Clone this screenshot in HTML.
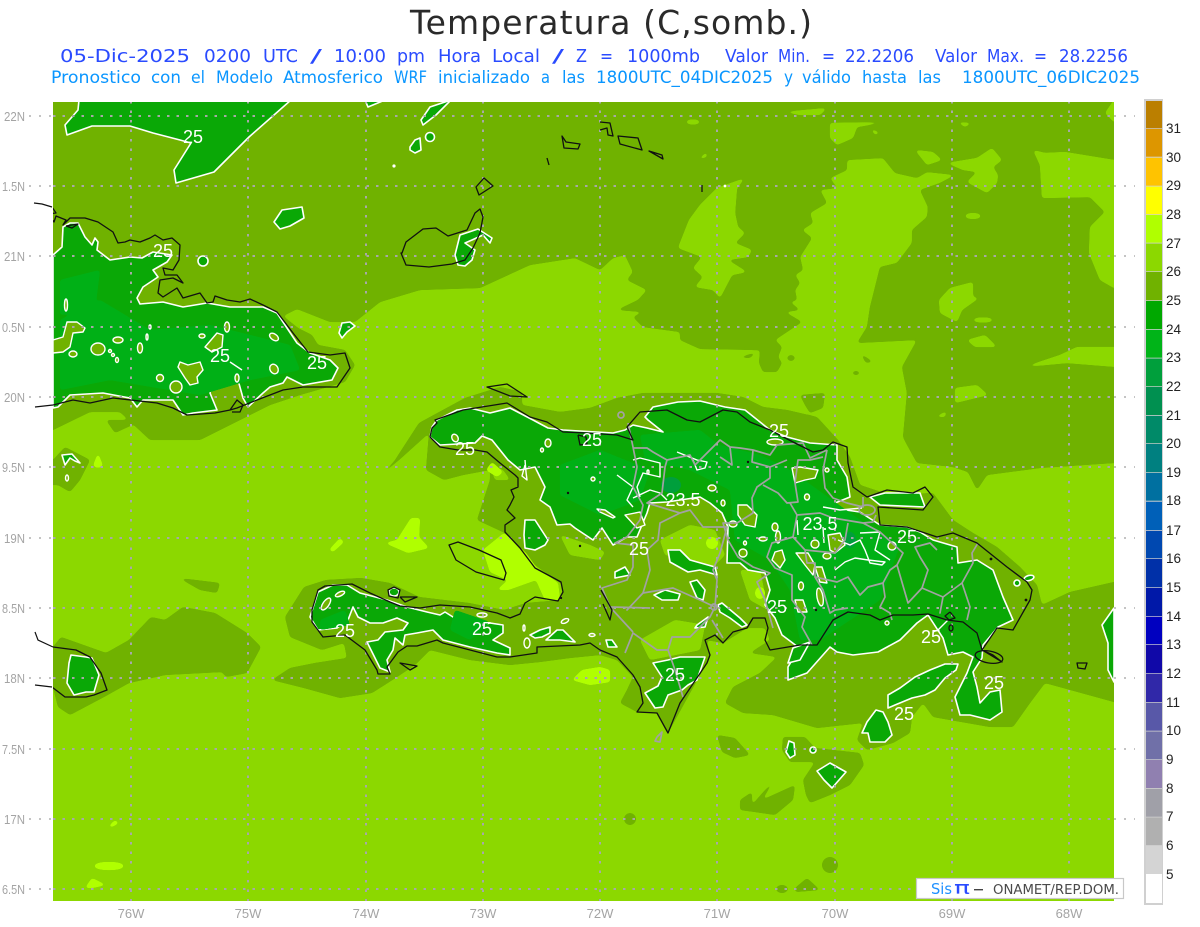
<!DOCTYPE html>
<html lang="es"><head><meta charset="utf-8"><title>Temperatura</title>
<style>html,body{margin:0;padding:0;background:#fff}svg{display:block}text{font-family:"Liberation Sans",sans-serif}.d text,text.d{font-family:"DejaVu Sans",sans-serif}</style></head>
<body>
<svg width="1200" height="927" viewBox="0 0 1200 927" xmlns="http://www.w3.org/2000/svg">
<rect width="1200" height="927" fill="#fff"/>
<!-- titles -->
<text class="d" x="410" y="34" font-size="33" fill="#2a2a2a" textLength="402" lengthAdjust="spacing">Temperatura (C,somb.)</text>
<g class="d" font-size="17.500" fill="#2a4bff">
<text x="60" y="62" textLength="130" lengthAdjust="spacingAndGlyphs">05-Dic-2025</text>
<text x="204" y="62" textLength="47" lengthAdjust="spacingAndGlyphs">0200</text>
<text x="263" y="62" textLength="35" lengthAdjust="spacingAndGlyphs">UTC</text>
<text x="310" y="62" textLength="12" lengthAdjust="spacingAndGlyphs">/</text>
<text x="334" y="62" textLength="52" lengthAdjust="spacingAndGlyphs">10:00</text>
<text x="397" y="62" textLength="28" lengthAdjust="spacingAndGlyphs">pm</text>
<text x="438" y="62" textLength="43" lengthAdjust="spacingAndGlyphs">Hora</text>
<text x="492" y="62" textLength="48" lengthAdjust="spacingAndGlyphs">Local</text>
<text x="552" y="62" textLength="12" lengthAdjust="spacingAndGlyphs">/</text>
<text x="576" y="62" textLength="11" lengthAdjust="spacingAndGlyphs">Z</text>
<text x="600" y="62" textLength="13" lengthAdjust="spacingAndGlyphs">=</text>
<text x="627" y="62" textLength="73" lengthAdjust="spacingAndGlyphs">1000mb</text>
<text x="725" y="62" textLength="43" lengthAdjust="spacingAndGlyphs">Valor</text>
<text x="778" y="62" textLength="32" lengthAdjust="spacingAndGlyphs">Min.</text>
<text x="822" y="62" textLength="13" lengthAdjust="spacingAndGlyphs">=</text>
<text x="845" y="62" textLength="69" lengthAdjust="spacingAndGlyphs">22.2206</text>
<text x="935" y="62" textLength="42" lengthAdjust="spacingAndGlyphs">Valor</text>
<text x="987" y="62" textLength="37" lengthAdjust="spacingAndGlyphs">Max.</text>
<text x="1034" y="62" textLength="13" lengthAdjust="spacingAndGlyphs">=</text>
<text x="1059" y="62" textLength="69" lengthAdjust="spacingAndGlyphs">28.2256</text>
</g>
<g class="d" font-size="17" fill="#0a96ff">
<text x="51" y="83" textLength="90" lengthAdjust="spacingAndGlyphs">Pronostico</text>
<text x="151" y="83" textLength="30" lengthAdjust="spacingAndGlyphs">con</text>
<text x="191" y="83" textLength="14" lengthAdjust="spacingAndGlyphs">el</text>
<text x="216" y="83" textLength="57" lengthAdjust="spacingAndGlyphs">Modelo</text>
<text x="283" y="83" textLength="100" lengthAdjust="spacingAndGlyphs">Atmosferico</text>
<text x="394" y="83" textLength="33" lengthAdjust="spacingAndGlyphs">WRF</text>
<text x="438" y="83" textLength="92" lengthAdjust="spacingAndGlyphs">inicializado</text>
<text x="541" y="83" textLength="9" lengthAdjust="spacingAndGlyphs">a</text>
<text x="562" y="83" textLength="23" lengthAdjust="spacingAndGlyphs">las</text>
<text x="596" y="83" textLength="177" lengthAdjust="spacingAndGlyphs">1800UTC_04DIC2025</text>
<text x="784" y="83" textLength="9" lengthAdjust="spacingAndGlyphs">y</text>
<text x="802" y="83" textLength="49" lengthAdjust="spacingAndGlyphs">válido</text>
<text x="862" y="83" textLength="45" lengthAdjust="spacingAndGlyphs">hasta</text>
<text x="918" y="83" textLength="23" lengthAdjust="spacingAndGlyphs">las</text>
<text x="962" y="83" textLength="178" lengthAdjust="spacingAndGlyphs">1800UTC_06DIC2025</text>
</g>

<defs>
<clipPath id="m"><rect x="53" y="102" width="1061" height="799"/></clipPath>
<filter id="g" filterUnits="userSpaceOnUse" x="0" y="80" width="1200" height="847" color-interpolation-filters="sRGB">
<feGaussianBlur stdDeviation="1.6"/>
<feColorMatrix type="matrix" values="1 0 0 0 0 0 1 0 0 0 0 0 1 0 0 0 0 0 14 -6"/>
</filter>
</defs>
<rect x="53" y="102" width="1061" height="799" fill="#8cd800"/>
<g clip-path="url(#m)">
<!-- olive -->
<g fill="#70b200" filter="url(#g)">
<polygon points="40,90 1130,90 1130,463 1114,463 1040,468 987,475 977,490 968,472 953,467 917,463 906,443 903,437 907,393 902,367 917,340 857,343 867,327 870,307 880,267 897,263 912,243 912,230 927,217 928,207 920,190 940,183 955,175 927,172 917,178 895,173 883,158 847,160 847,170 830,178 837,188 820,190 827,203 810,213 813,223 802,230 812,238 800,257 803,270 795,275 800,283 795,290 797,300 790,302 800,310 785,312 802,322 790,330 775,340 782,347 778,357 782,363 777,372 763,372 759,363 760,350 700,349 680,340 680,332 643,327 633,317 643,312 617,310 638,300 647,290 627,280 633,272 625,255 613,258 600,270 575,258 530,265 480,288 420,290 380,302 355,322 330,322 297,309 283,316 298,328 312,335 318,345 345,350 355,365 345,382 300,395 270,405 240,420 200,440 150,440 120,412 90,412 53,430 40,436"/>
<polygon points="369,487 395,460 419,423 465,398 500,387 522,392 522,405 560,412 590,408 617,398 643,393 717,393 743,397 763,407 787,410 817,417 838,440 850,457 860,485 890,495 933,493 953,520 973,533 997,547 1020,567 1037,585 1042,605 1070,592 1114,582 1130,582 1130,708 1114,702 1045,683 1030,703 1013,727 990,727 933,717 923,703 912,717 910,733 893,743 867,750 857,740 863,723 817,728 773,715 743,713 725,703 733,687 760,673 777,657 750,653 770,640 765,628 747,628 723,643 707,640 710,657 690,693 668,733 657,713 637,712 620,703 627,690 633,677 617,660 600,655 570,658 540,662 510,665 470,660 430,650 415,665 397,677 372,693 340,698 304,688 272,680 290,668 315,663 347,658 344,643 322,650 290,637 285,617 304,587 326,580 361,578 390,583 419,597 469,603 504,610 526,603 562,600 563,585 535,565 505,533 477,520 490,480 490,470 463,475 444,480 426,470 429,433"/>
<polygon points="61,637 106,653 129,640 151,617 165,620 183,607 215,613 247,633 261,647 254,660 247,673 226,677 222,672 165,675 129,683 104,697 70,715 58,707 53,687 40,687 40,647 53,647"/>
<polygon points="179,578 220,583 217,593 200,590"/>
<polygon points="40,460 53,460 65,447 90,460 80,480 70,492 58,485 40,485"/>
<polygon points="106,420 115,433 143,420"/>
<polygon points="717,735 735,738 750,755 735,758 722,752"/>
<polygon points="783,737 805,737 815,748 860,753 864,765 850,785 830,795 810,803 806,795 803,780 815,762 790,762 782,750"/>
<polygon points="740,800 752,792 752,805 765,790 776,778 762,800 795,785 793,800 775,815 755,812 740,810"/>
<circle cx="630" cy="819" r="6"/><circle cx="830" cy="865" r="8"/>
<polygon points="795,888 807,878 820,890 795,892"/><ellipse cx="782" cy="889" rx="6" ry="4"/>
<polygon points="860,353 873,362 866,363"/><ellipse cx="856" cy="373" rx="4" ry="2"/><ellipse cx="791" cy="358" rx="4" ry="3"/>
<polygon points="800,395 825,393 823,408 810,413 805,405"/><polygon points="737,358 757,352 750,358"/>
</g>
<!-- light patches -->
<g fill="#8cd800" filter="url(#g)">
<polygon points="783,112 827,108 820,115 800,115"/>
<polygon points="830,123 888,122 857,127 853,138 837,145 830,138"/>
<polygon points="870,128 880,133 875,135"/>
<polygon points="915,150 933,152 942,160 927,165"/>
<polygon points="957,122 972,123 965,127"/>
<polygon points="947,163 977,158 992,148 1002,160 993,167 998,175 997,183 987,193 967,182 977,172 963,170"/>
<polygon points="1033,150 1040,165 1042,198 1090,197 1105,212 1090,227 1089,253 1100,280 1114,288 1130,290 1130,160 1114,160 1065,152 1045,153"/>
<polygon points="1105,113 1114,100 1130,100 1130,122 1114,122"/>
<polygon points="689,220 700,205 717,188 745,178 737,188 735,213 738,227 745,233 735,243 752,250 748,257 728,260 747,272 732,275 720,298 713,290 695,287 703,277 693,268 702,257 678,248"/>
<polygon points="939,300 950,288 973,282 973,297 979,298 962,310 957,322 940,313"/>
<polygon points="967,340 985,335 997,347 975,347"/>
<polygon points="1024,367 1060,355 1077,347 1130,347 1130,368 1067,363"/>
<polygon points="955,388 977,385 988,395 955,403"/>
<ellipse cx="973" cy="216" rx="8" ry="3"/><ellipse cx="983" cy="320" rx="10" ry="2.500"/>
<polygon points="697,160 707,152 707,157"/><ellipse cx="693" cy="122" rx="7" ry="2.500"/>
<polygon points="935,417 947,411 945,417"/>
<polygon points="660,540 690,525 715,530 725,555 710,570 690,560 665,555"/>
<polygon points="640,640 675,620 705,625 700,650 650,660"/>
<polygon points="740,570 760,570 768,610 750,600"/>
<polygon points="560,535 590,545 605,552 600,560 570,555"/>
<polygon points="490,465 503,470 510,480 495,480"/>
</g>
<!-- lime -->
<g fill="#b0ff00" filter="url(#g)">
<polygon points="483,550 504,533 526,553 536,567 558,583 560,600 545,600 536,580 508,590 497,590 508,580 490,572"/>
<polygon points="411,518 420,518 419,537 429,548 408,553 385,543 397,540"/>
<polygon points="329,550 340,538 344,542 333,552"/>
<polygon points="93,466 98,453 103,466 98,468"/>
<ellipse cx="109" cy="866" rx="15" ry="4"/><polygon points="85,888 92,878 106,885 92,888"/>
<polygon points="108,827 115,820 119,823 112,827"/>
<polygon points="572,680 582,670 600,667 610,670 610,682 590,685"/>
<polygon points="486,470 492,462 503,472 497,477"/>
<ellipse cx="712" cy="543" rx="6" ry="6"/><ellipse cx="760" cy="593" rx="5" ry="6"/>
</g>
<!-- green with white contour -->
<g fill="#0aa806" stroke="#fff" stroke-width="1.6" stroke-linejoin="round">
<polygon points="79,100 78,110 65,125 67,135 92,126 130,126 153,133 180,140 191,143 174,170 176,183 214,172 249,137 291,100"/>
<polygon points="365,100 368,107 385,100"/>
<polygon points="451,100 430,107 421,120 423,125 436,115"/>
<polygon points="410,147 415,140 420,138 421,150 415,153 410,150"/><circle cx="430" cy="137" r="4.5"/>
<polygon points="274,222 282,210 302,207 304,218 290,226 280,229"/>
<polygon points="455,255 460,235 478,229 492,238 490,243 483,235 472,240 465,243 475,250 472,260 465,266 458,265"/>
<circle cx="203" cy="261" r="5"/>
<polygon points="53,255 62,247 63,227 70,223 78,223 85,237 92,245 95,238 98,242 97,250 110,260 130,257 142,258 153,252 172,255 167,262 153,270 158,277 143,287 137,298 140,304 163,302 183,307 207,303 230,307 263,307 277,313 297,343 310,353 330,360 338,368 332,380 303,385 287,377 283,383 270,387 263,393 248,407 243,398 238,380 228,366 222,366 213,380 210,393 217,410 193,413 183,415 173,400 143,400 137,407 130,398 103,393 70,395 58,407 53,408"/>
<polygon points="339,333 342,338 347,332 355,326 350,322 342,323"/>
<polygon points="71,655 86,657 92,658 99,675 94,692 86,692 74,695 67,683 69,663"/>
<polygon points="318,592 333,585 347,585 360,593 387,600 407,607 427,612 440,615 445,612 453,617 465,618 470,622 453,622 470,628 490,623 503,625 503,633 493,640 510,648 510,655 497,653 470,647 443,640 433,630 417,633 405,635 403,645 395,638 393,650 387,660 390,672 380,668 367,642 378,640 385,632 403,630 408,623 397,618 383,623 370,623 358,617 353,607 348,620 337,628 318,630 310,617"/>
<ellipse cx="394" cy="592" rx="5" ry="4"/>
<polygon points="530,635 540,630 550,627 550,633 542,637 535,638"/>
<polygon points="546,640 557,630 563,630 575,642 560,640"/>
<polygon points="437,420 457,410 470,408 490,413 510,408 533,420 548,428 563,430 613,433 625,430 633,425 647,428 663,432 648,420 645,417 653,407 678,402 700,401 725,407 745,410 770,430 787,437 810,443 837,445 837,460 847,477 850,497 825,507 860,512 880,525 907,527 920,532 933,540 957,547 958,563 977,560 993,570 1003,597 1013,620 998,627 983,645 982,658 973,672 977,687 980,703 990,692 1000,690 1002,712 990,720 970,715 960,715 955,697 967,673 973,657 963,652 948,655 943,638 928,615 917,623 900,640 878,652 853,655 837,652 830,647 807,673 788,680 788,667 800,647 798,647 782,635 775,618 765,605 770,590 765,573 748,570 740,563 727,563 728,527 722,513 710,503 700,497 667,502 650,503 647,513 637,537 627,537 613,545 602,528 593,540 575,528 570,524 557,525 550,507 540,500 545,487 535,467 520,470 508,460 492,440 482,436 475,443 440,445 430,437 432,427"/>
<polygon points="870,497 885,493 920,493 925,507 880,505"/>
<polygon points="525,520 535,520 548,540 545,545 535,550 525,548 524,535"/>
<polygon points="668,550 680,550 690,560 715,567 717,575 700,570 688,572 670,562"/>
<polygon points="615,572 625,567 630,575 615,578"/>
<polygon points="690,582 697,580 705,590 703,600 697,598"/>
<polygon points="654,595 665,590 680,594 678,600 662,600"/>
<polygon points="653,663 668,660 680,657 705,657 697,680 688,685 682,690 668,695 663,707 655,708 645,693 658,686 662,677"/>
<polygon points="606,640 612,640 617,647 608,647"/>
<polygon points="718,605 722,603 740,618 747,625 742,627 730,618 720,612"/>
<polygon points="697,625 708,617 705,627 695,628"/>
<polygon points="788,663 793,648 810,642 800,660"/>
<polygon points="888,695 900,688 915,677 930,670 945,664 958,664 956,670 945,678 935,690 925,695 912,698 895,705 888,708"/>
<polygon points="862,733 867,722 876,710 883,712 888,722 892,735 885,742 870,742 868,733"/>
<polygon points="786,752 789,741 794,743 795,755 790,758"/>
<circle cx="813" cy="750" r="3"/>
<polygon points="817,771 830,763 846,772 832,788 824,780"/>
<polygon points="1114,608 1102,625 1108,643 1108,670 1114,682"/>
<polygon points="62,455 72,454 80,463 75,461 70,458 65,465"/>
<circle cx="1017" cy="583" r="3"/>
<ellipse cx="1029" cy="578" rx="5" ry="2.5" transform="rotate(-15 1029 578)"/>
</g>
<!-- lighter green interior -->
<g fill="#00b016" filter="url(#g)">
<polygon points="700,440 760,455 790,470 860,520 900,545 880,600 820,640 800,640 790,590 770,560 735,540 730,490 690,470"/>
<polygon points="60,320 100,300 150,330 210,325 290,345 300,370 250,380 200,395 110,380 60,390"/>
<polygon points="560,465 600,450 650,470 640,500 600,515 560,495"/>
<polygon points="60,280 100,270 95,310 60,315"/>
<polygon points="320,620 345,610 350,625 320,630"/>
<polygon points="455,610 490,622 470,640 450,630"/>
<polygon points="640,435 700,430 725,450 690,470 645,460"/>
</g>
<g fill="#009f3c"><ellipse cx="671" cy="485" rx="10" ry="8"/><ellipse cx="850" cy="540" rx="6" ry="8"/><ellipse cx="215" cy="343" rx="4" ry="5"/></g>
<!-- holes -->
<g fill="#70b200" stroke="#fff" stroke-width="1.4" stroke-linejoin="round">
<polygon points="53,340 63,337 67,322 77,322 85,328 83,332 73,333 70,347 63,352 53,353"/>
<ellipse cx="66" cy="305" rx="1.5" ry="6"/><ellipse cx="73" cy="354" rx="4" ry="3"/><ellipse cx="98" cy="349" rx="7" ry="6"/><ellipse cx="118" cy="340" rx="5" ry="3"/>
<circle cx="110" cy="351" r="1.5"/><circle cx="113" cy="355" r="1.5"/><ellipse cx="117" cy="360" rx="1.5" ry="2.5"/>
<ellipse cx="140" cy="348" rx="2.5" ry="5"/><ellipse cx="150" cy="327" rx="1" ry="2"/><ellipse cx="147" cy="337" rx="1" ry="3"/>
<circle cx="160" cy="378" r="3.5"/><circle cx="176" cy="387" r="6"/>
<polygon points="180,362 188,365 200,362 203,370 197,377 198,383 190,385 185,378 178,367"/>
<polygon points="205,347 217,333 223,335 222,347 212,352"/>
<ellipse cx="227" cy="327" rx="2.5" ry="5"/><ellipse cx="202" cy="336" rx="3" ry="2"/><ellipse cx="274" cy="337" rx="5" ry="3" transform="rotate(35 274 337)"/><ellipse cx="274" cy="369" rx="4" ry="5" transform="rotate(-30 274 369)"/><ellipse cx="237" cy="378" rx="2" ry="4"/>
<ellipse cx="326" cy="604" rx="3" ry="7" transform="rotate(35 326 604)"/><ellipse cx="340" cy="594" rx="5" ry="2" transform="rotate(-25 340 594)"/>
<ellipse cx="482" cy="615" rx="5" ry="2"/><ellipse cx="565" cy="621" rx="4" ry="2" transform="rotate(-25 565 621)"/><ellipse cx="524" cy="628" rx="1" ry="3"/><ellipse cx="527" cy="643" rx="3" ry="5"/>
<polygon points="597,509 605,510 615,517 613,518 600,512"/>
<ellipse cx="648" cy="472" rx="1" ry="2"/><circle cx="593" cy="479" r="2"/><ellipse cx="723" cy="503" rx="2" ry="3"/><ellipse cx="712" cy="488" rx="4" ry="3"/><ellipse cx="548" cy="443" rx="3" ry="4"/><ellipse cx="542" cy="450" rx="1.5" ry="2"/><ellipse cx="455" cy="438" rx="3" ry="4" transform="rotate(-30 455 438)"/>
<ellipse cx="775" cy="442" rx="8" ry="3"/>
<polygon points="792,468 800,467 818,470 815,478 805,480 795,483"/>
<ellipse cx="807" cy="497" rx="2.5" ry="3"/><circle cx="827" cy="470" r="2"/>
<polygon points="738,505 747,505 757,515 755,527 745,525 738,515"/>
<ellipse cx="733" cy="524" rx="4" ry="3"/><ellipse cx="775" cy="527" rx="3" ry="4"/><ellipse cx="815" cy="544" rx="4" ry="4"/>
<polygon points="828,535 840,533 845,545 835,553 830,550"/>
<ellipse cx="778" cy="537" rx="2.5" ry="6"/>
<polygon points="775,552 782,550 785,560 780,568 772,560"/>
<ellipse cx="763" cy="539" rx="4" ry="2"/><ellipse cx="745" cy="543" rx="1.5" ry="2"/><circle cx="743" cy="553" r="4"/>
<ellipse cx="801" cy="586" rx="2.5" ry="4"/>
<polygon points="795,600 803,600 807,612 798,612"/>
<ellipse cx="820" cy="597" rx="3" ry="9" transform="rotate(-10 820 597)"/><ellipse cx="827" cy="556" rx="4" ry="3"/>
<polygon points="796,553 808,553 815,565 813,575 805,565"/>
<polygon points="815,567 822,567 827,583 820,582"/>
<circle cx="887" cy="623" r="2"/><circle cx="892" cy="546" r="4"/>
<ellipse cx="592" cy="635" rx="3" ry="1.5"/>
<polygon points="625,515 640,512 645,525 637,528"/>
<ellipse cx="67" cy="478" rx="1.5" ry="3"/>
</g>
<g fill="none" stroke="#fff" stroke-width="1.4" stroke-linejoin="round">
<polyline points="525,460 526,472 527,480 522,476 525,465"/>
<polyline points="633,460 640,458 660,463 660,477 643,473 637,487 640,497"/>
<polyline points="617,475 633,487 627,500 633,507"/>
<polyline points="633,498 650,490 660,493 667,500"/>
<polyline points="677,452 697,460 707,462 705,468 697,470 693,460"/>
<polyline points="230,362 242,370"/>
<polyline points="835,570 845,562 855,558 868,560 885,562 882,565 870,563 865,550 860,540 850,545 838,540"/>
<polyline points="823,507 840,510 862,508"/>
<polyline points="798,535 797,520"/><polyline points="823,527 824,543"/>
<polyline points="948,620 938,630 933,632"/>
<polyline points="860,533 880,532 875,550 890,560"/>
</g>
<!-- grid -->
<g stroke="#a8a8a8" stroke-width="2" stroke-dasharray="2.5 7" fill="none">
<path d="M131 101V901M248 101V901M366 101V901M483 101V901M600 101V901M717 101V901M835 101V901M952 101V901M1069 101V901"/>
<path d="M53 116H1114M53 186H1114M53 256H1114M53 327H1114M53 397H1114M53 467H1114M53 538H1114M53 608H1114M53 678H1114M53 749H1114M53 819H1114M53 889H1114"/>
</g>
<!-- borders -->
<g fill="none" stroke="#a2a2a2" stroke-width="1.7" stroke-linejoin="round">
<polyline points="628,423 633,447 637,467 633,487 643,505 640,520 627,537 615,543 633,545 633,567 627,580 602,588 610,607 650,608"/>
<polyline points="633,448 647,448 653,452 667,460 665,467 662,493 647,503 680,513 660,523 658,540 647,550 650,570 643,593 627,610 643,593 673,588 700,600 715,607 717,580 713,570 720,553 727,527 703,527 690,510 680,513"/>
<polyline points="667,460 690,455 695,465 720,440 730,447 740,448 753,450 770,455 777,445 803,443 810,458 827,450"/>
<polyline points="730,447 732,465 720,457"/><polyline points="753,450 752,462 770,467"/>
<polyline points="787,460 770,467 770,478 757,487 752,498 753,513 737,523 723,523 728,540 738,557 753,567 770,573 757,582 765,600 773,628"/>
<polyline points="763,485 778,493 787,503 798,502 795,483 798,460 810,460 823,457"/>
<polyline points="827,450 823,470 825,488 833,498 847,503 863,507 863,497"/>
<ellipse cx="867" cy="510" rx="8" ry="5"/>
<polyline points="790,503 797,515 820,513 833,518 863,523 873,522 876,515"/>
<polyline points="797,515 793,537 805,550 807,563 815,563 815,577 823,590 830,613 835,610 848,608"/>
<polyline points="793,537 772,543 767,557 775,568 792,575 792,600 805,617 802,627 812,645"/>
<polyline points="805,550 835,553 845,540 848,523"/>
<polyline points="815,577 837,582 848,577 860,595 868,587 883,583 885,597 880,607 890,613 892,620"/>
<polyline points="863,523 880,532 903,553 897,565 890,570 883,583"/>
<polyline points="897,565 908,603 922,588 928,570 920,557 915,547 930,543 937,550"/>
<polyline points="922,588 943,597 940,613 943,597 962,583 970,607 967,620"/>
<polyline points="962,583 973,563 972,553 978,543"/>
<polyline points="625,653 633,633 657,650 668,650 672,637 690,637 697,630 710,617 715,607"/>
<polyline points="668,650 675,670 683,697"/>
<polyline points="610,607 633,632"/><polyline points="712,620 723,638"/>
<polyline points="657,737 662,732 660,742 655,741 657,737"/>
<circle cx="714" cy="607" r="3"/><circle cx="621" cy="415" r="3"/>
</g>
<!-- coast -->
<g fill="none" stroke="#111" stroke-width="1.3" stroke-linejoin="round">
<polyline points="52,207 56,213 48,214 54,222 56,216 66,220 63,225 70,218 85,218 98,222 113,232 118,243 125,242 130,240 140,242 150,238 155,235 163,240 172,238 180,245 179,260 173,270 163,268 165,275 177,275 183,283 173,278 160,280 158,293 163,297 177,288 183,298 200,293 207,303 213,302 215,296 227,300 240,302 250,299 263,305 277,312 293,333 308,352 330,355 345,353 350,368 337,387 303,387 283,390 257,400 237,408 230,410 215,413 187,415 173,408 157,403 113,398 90,403 73,400 53,405"/>
<polyline points="66,226 78,224 72,228 66,226"/>
<polyline points="230,410 237,400 243,405 240,412 232,412"/>
<polygon points="402,253 406,242 423,229 436,228 448,236 467,230 475,213 480,209 483,217 480,233 473,248 465,260 452,264 429,267 406,265 401,253"/>
<polygon points="476,187 484,178 493,186 479,195"/>
<polygon points="562,136 566,142 580,144 578,149 564,148"/>
<polyline points="600,122 610,123 613,136 608,135 607,128 600,130"/>
<polygon points="618,136 638,138 642,150 620,144"/>
<polygon points="649,151 662,155 663,159"/>
<polyline points="702,185 702,192"/><polyline points="547,158 549,165"/>
<polygon points="437,423 432,428 430,437 440,447 458,450 475,450 487,452 500,463 515,475 518,478 518,487 511,490 514,497 510,505 507,510 515,518 505,525 505,532 520,548 535,568 548,575 561,582 563,592 558,601 535,597 525,603 520,614 510,618 497,613 470,607 440,605 420,608 400,606 390,602 370,593 352,584 325,586 318,590 312,610 312,622 323,637 345,635 365,650 377,670 378,674 390,674 387,667 398,652 407,646 417,646 437,640 443,643 470,650 497,657 510,657 537,653 537,647 580,645 590,643 600,650 617,657 633,675 640,687 643,703 637,712 657,713 668,733 680,703 707,663 710,655 705,640 715,635 723,643 733,632 747,628 753,618 765,618 768,628 765,640 770,650 800,645 817,645 833,620 848,612 870,615 880,620 893,615 913,615 928,614 947,620 963,622 977,633 982,650 993,655 1002,662 982,650 997,628 1013,630 1030,600 1032,590 1027,582 1007,567 977,543 953,533 937,537 907,527 880,525 878,507 923,510 933,497 925,487 913,493 887,490 867,497 853,487 848,463 847,447 833,442 823,450 813,452 793,442 770,430 750,422 737,412 723,410 700,422 687,420 667,410 640,412 627,427 633,440 617,435 587,433 563,432 547,422 530,417 507,403 463,410 435,420"/>
<polygon points="449,545 458,542 479,550 501,560 506,573 504,580 476,572 456,560"/>
<polygon points="487,387 507,384 527,397 510,396"/>
<polygon points="400,663 417,666 410,670"/>
<polyline points="394,587 400,590 398,598 389,596 388,590 394,587"/>
<polyline points="400,597 417,597 405,602 400,597"/>
<polyline points="53,647 76,650 90,657 101,673 107,690 94,695 86,697 65,697 52,687"/>
<polygon points="1077,663 1087,663 1085,669 1078,668"/>
<ellipse cx="989" cy="657" rx="14" ry="6" transform="rotate(10 989 657)"/>
<polyline points="578,435 586,437 587,444 580,445 578,435"/>
<polyline points="950,612 955,618 949,620 945,616 950,612"/>
<ellipse cx="951" cy="628" rx="2" ry="3"/>
<polyline points="601,590 612,610 610,620 603,604"/>
</g>
<g fill="#111"><circle cx="991" cy="559" r="1.4"/><circle cx="1026" cy="600" r="1.4"/><circle cx="748" cy="462" r="1.2"/><circle cx="816" cy="610" r="1.2"/><circle cx="568" cy="493" r="1.2"/><circle cx="580" cy="546" r="1.2"/><circle cx="561" cy="598" r="1.2"/></g>
<circle cx="394" cy="166" r="1.6" fill="#fff"/><circle cx="725" cy="186" r="1.4" fill="#fff"/>
<!-- contour labels -->
<g font-size="18" fill="#fff" text-anchor="middle">
<text x="193" y="143">25</text><text x="163" y="257">25</text><text x="220" y="362">25</text><text x="317" y="369">25</text><text x="465" y="455">25</text><text x="592" y="446">25</text><text x="779" y="437">25</text><text x="683" y="506">23.5</text><text x="820" y="530">23.5</text><text x="907" y="543">25</text><text x="639" y="555">25</text><text x="777" y="613">25</text><text x="931" y="643">25</text><text x="675" y="681">25</text><text x="994" y="689">25</text><text x="904" y="720">25</text><text x="345" y="637">25</text><text x="482" y="635">25</text>
</g>
</g>
<!-- coast outside the map frame -->
<g fill="none" stroke="#111" stroke-width="1.2">
<polyline points="34,203 42,204 52,207"/>
<polyline points="35,407 53,405"/>
<polyline points="35,632 38,640 53,647"/>
<polyline points="35,685 52,687"/>
</g>
<!-- grid outside map -->
<g stroke="#b0b0b0" stroke-width="1.5" stroke-dasharray="2 8" fill="none">
<path d="M29 116H53M29 186H53M29 256H53M29 327H53M29 397H53M29 467H53M29 538H53M29 608H53M29 678H53M29 749H53M29 819H53M29 889H53"/>
<path d="M1114 116H1135M1114 186H1135M1114 256H1135M1114 327H1135M1114 397H1135M1114 467H1135M1114 538H1135M1114 608H1135M1114 678H1135M1114 749H1135M1114 819H1135"/>
</g>
<!-- axis labels -->
<g font-size="13" fill="#a4a4a4">
<text x="4" y="121" textLength="21" lengthAdjust="spacingAndGlyphs">22N</text><text x="2" y="191" textLength="23" lengthAdjust="spacingAndGlyphs">1.5N</text><text x="4" y="261" textLength="21" lengthAdjust="spacingAndGlyphs">21N</text><text x="2" y="332" textLength="23" lengthAdjust="spacingAndGlyphs">0.5N</text><text x="4" y="402" textLength="21" lengthAdjust="spacingAndGlyphs">20N</text><text x="2" y="472" textLength="23" lengthAdjust="spacingAndGlyphs">9.5N</text><text x="4" y="543" textLength="21" lengthAdjust="spacingAndGlyphs">19N</text><text x="2" y="613" textLength="23" lengthAdjust="spacingAndGlyphs">8.5N</text><text x="4" y="683" textLength="21" lengthAdjust="spacingAndGlyphs">18N</text><text x="2" y="754" textLength="23" lengthAdjust="spacingAndGlyphs">7.5N</text><text x="4" y="824" textLength="21" lengthAdjust="spacingAndGlyphs">17N</text><text x="2" y="894" textLength="23" lengthAdjust="spacingAndGlyphs">6.5N</text>
<g text-anchor="middle">
<text x="131" y="918">76W</text><text x="248" y="918">75W</text><text x="366" y="918">74W</text><text x="483" y="918">73W</text><text x="600" y="918">72W</text><text x="717" y="918">71W</text><text x="835" y="918">70W</text><text x="952" y="918">69W</text><text x="1069" y="918">68W</text>
</g>
</g>
<!-- colorbar -->
<rect x="1144" y="99" width="19" height="806" fill="#d0d0d0"/>
<g>
<rect x="1146" y="101" width="16" height="27.3" fill="#bb7f00"/><rect x="1146" y="129" width="16" height="27.7" fill="#dd9600"/><rect x="1146" y="157.700" width="16" height="28" fill="#ffc300"/><rect x="1146" y="186.500" width="16" height="27.800" fill="#ffff00"/><rect x="1146" y="215" width="16" height="27.700" fill="#b0ff00"/><rect x="1146" y="243.500" width="16" height="27.800" fill="#8cd800"/><rect x="1146" y="272" width="16" height="28.300" fill="#70b200"/><rect x="1146" y="301" width="16" height="28" fill="#00a800"/><rect x="1146" y="329.800" width="16" height="27.900" fill="#00b418"/><rect x="1146" y="358.500" width="16" height="27.800" fill="#009f3c"/><rect x="1146" y="387" width="16" height="28" fill="#009050"/><rect x="1146" y="415.800" width="16" height="27.500" fill="#008a68"/><rect x="1146" y="444" width="16" height="28.300" fill="#008080"/><rect x="1146" y="473" width="16" height="27.700" fill="#0070a0"/><rect x="1146" y="501.700" width="16" height="28.300" fill="#0060b8"/><rect x="1146" y="530.800" width="16" height="27.500" fill="#0048b0"/><rect x="1146" y="559" width="16" height="28.300" fill="#0030a8"/><rect x="1146" y="588" width="16" height="28" fill="#0018a8"/><rect x="1146" y="616.700" width="16" height="27.600" fill="#0000c0"/><rect x="1146" y="645" width="16" height="28.300" fill="#1008a8"/><rect x="1146" y="674" width="16" height="28" fill="#3028a8"/><rect x="1146" y="702.700" width="16" height="28" fill="#5858a8"/><rect x="1146" y="731.500" width="16" height="27.800" fill="#7070a8"/><rect x="1146" y="760" width="16" height="28" fill="#9080b0"/><rect x="1146" y="788.800" width="16" height="27.900" fill="#a0a0a8"/><rect x="1146" y="817.500" width="16" height="27.800" fill="#b0b0b0"/><rect x="1146" y="845.300" width="16" height="28.700" fill="#d4d4d4"/><rect x="1146" y="874" width="16" height="29" fill="#fff"/>
</g>
<g font-size="13.5" fill="#222">
<text x="1166" y="133">31</text><text x="1166" y="162">30</text><text x="1166" y="190">29</text><text x="1166" y="219">28</text><text x="1166" y="248">27</text><text x="1166" y="276">26</text><text x="1166" y="305">25</text><text x="1166" y="334">24</text><text x="1166" y="362">23</text><text x="1166" y="391">22</text><text x="1166" y="420">21</text><text x="1166" y="448">20</text><text x="1166" y="477">19</text><text x="1166" y="505">18</text><text x="1166" y="535">17</text><text x="1166" y="563">16</text><text x="1166" y="592">15</text><text x="1166" y="621">14</text><text x="1166" y="649">13</text><text x="1166" y="678">12</text><text x="1166" y="707">11</text><text x="1166" y="735">10</text><text x="1166" y="764">9</text><text x="1166" y="793">8</text><text x="1166" y="821">7</text><text x="1166" y="850">6</text><text x="1166" y="879">5</text>
</g>
<!-- credit box -->
<rect x="916.500" y="878.500" width="207" height="20" fill="#fff" stroke="#c8c8c8" stroke-width="1.2"/>
<text class="d" x="931" y="894" font-size="15" fill="#1e90ff" textLength="21" lengthAdjust="spacingAndGlyphs">Sis</text>
<text class="d" x="954" y="894" font-size="18" fill="#2a4bff" textLength="16" lengthAdjust="spacingAndGlyphs" font-weight="normal">π</text>
<rect x="974" y="889" width="9" height="1.400" fill="#444"/>
<text class="d" x="993" y="894" font-size="13.500" fill="#4a4a4a" textLength="126" lengthAdjust="spacingAndGlyphs">ONAMET/REP.DOM.</text>
</svg>
</body></html>
